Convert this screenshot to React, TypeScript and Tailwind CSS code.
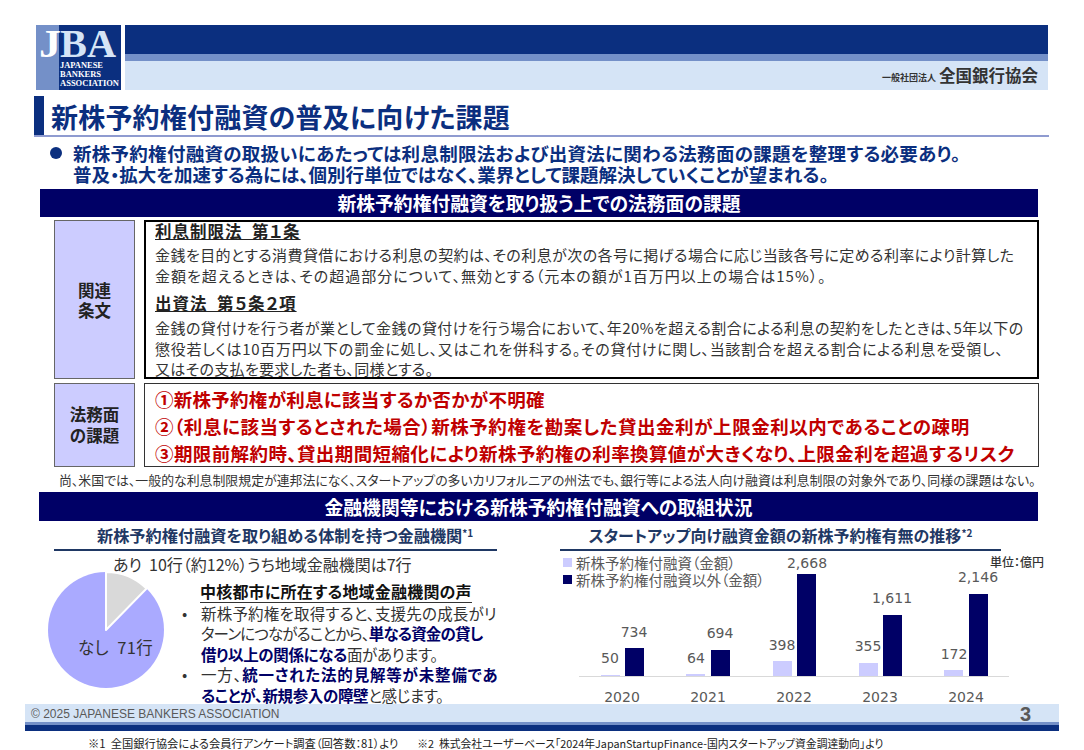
const jp = "font-['Noto_Sans_CJK_JP','Noto_Sans',sans-serif] [font-feature-settings:'palt']";

const bars = [
  { y: "2020", x: 622, lx: 601, lt: 676, dx: 625, dt: 649, l: "50", llx: 610, lly: 664, d: "734", dlx: 634, dly: 638 },
  { y: "2021", x: 708, lx: 686, lt: 675, dx: 711, dt: 651, l: "64", llx: 696, lly: 664, d: "694", dlx: 720, dly: 639 },
  { y: "2022", x: 794, lx: 773, lt: 662, dx: 797, dt: 575, l: "398", llx: 782, lly: 651, d: "2,668", dlx: 807, dly: 569 },
  { y: "2023", x: 880, lx: 859, lt: 664, dx: 883, dt: 616, l: "355", llx: 868, lly: 652, d: "1,611", dlx: 892, dly: 604 },
  { y: "2024", x: 966, lx: 944, lt: 671, dx: 969, dt: 595, l: "172", llx: 954, lly: 660, d: "2,146", dlx: 978, dly: 583 },
];

function Logo() {
  return (
    <svg width="85" height="65" viewBox="0 0 85 65" className="shrink-0 overflow-visible">
      <rect width="85" height="65" fill="#0b2f7f" />
      <rect width="23" height="65" fill="#7490c8" />
      <g fontFamily="'Liberation Serif', serif" fontWeight="700">
        <text x="3" y="32" fontSize="40" fill="#fff" textLength="22" lengthAdjust="spacingAndGlyphs">J</text>
        <text x="24" y="32" fontSize="40" fill="#d5e4f6" textLength="56" lengthAdjust="spacingAndGlyphs">BA</text>
        <text x="24" y="43" fontSize="8" fill="#fff" textLength="43" lengthAdjust="spacingAndGlyphs">JAPANESE</text>
        <text x="24" y="52" fontSize="8" fill="#fff" textLength="41" lengthAdjust="spacingAndGlyphs">BANKERS</text>
        <text x="24" y="61" fontSize="8" fill="#fff" textLength="59" lengthAdjust="spacingAndGlyphs">ASSOCIATION</text>
      </g>
    </svg>
  );
}

function Pie() {
  const a = (44.4 * Math.PI) / 180;
  const r = 58;
  const px = 58 + r * Math.sin(a);
  const py = 58 - r * Math.cos(a);
  return (
    <svg width="118" height="118" viewBox="0 0 118 118" className="shrink-0">
      <circle cx="58" cy="58" r={r} fill="#aaaaff" />
      <path d={`M58 58 L58 0 A${r} ${r} 0 0 1 ${px} ${py} Z`} fill="#d9d9d9" stroke="#fff" strokeWidth="2" strokeLinejoin="round" />
    </svg>
  );
}

function Chart() {
  return (
    <svg width="500" height="150" viewBox="560 555 500 150" className="block">
      {bars.map((b) => (
        <g key={b.y} fontFamily="'DejaVu Sans', sans-serif" fontSize="14" fill="#595959" textAnchor="middle">
          <rect x={b.lx} y={b.lt} width="19" height={677 - b.lt} fill="#ccccff" />
          <rect x={b.dx} y={b.dt} width="19" height={677 - b.dt} fill="#000066" />
          <text x={b.llx} y={b.lly}>{b.l}</text>
          <text x={b.dlx} y={b.dly}>{b.d}</text>
          <text x={b.x} y="703">{b.y}</text>
        </g>
      ))}
      <line x1="579" x2="1009" y1="677.5" y2="677.5" stroke="#d9d9d9" strokeWidth="1" />
    </svg>
  );
}

export default function App() {
  return (
    <div className={`${jp} relative w-[1084px] h-[750px] overflow-hidden bg-white pt-[25px]`}>
      <div className="ml-[36px] flex h-[65px] w-[1012px] gap-[4px]">
        <Logo />
        <div className="flex flex-1 flex-col">
          <div className="h-[29px] bg-[#0b2f7f]" />
          <div className="h-[7px] bg-[#7490c8]" />
          <div className="flex flex-1 items-center justify-end gap-[3px] bg-[#d5e4f6] pr-[10px]">
            <span className="text-[9px] font-bold leading-none text-[#333] mt-[3px]">一般社団法人</span>
            <span className="text-[16.5px] font-bold leading-none text-[#333]">全国銀行協会</span>
          </div>
        </div>
      </div>

      <div className="ml-[34px] mt-[6px] flex h-[41px] w-[1015px] border-b-2 border-[#8f9bd0]">
        <div className="w-[10px] bg-[#0b2f7f]" />
        <h1 className="ml-[7px] text-[27px] font-bold leading-[42px] tracking-[0.2px] text-[#0b2f7f] whitespace-nowrap">新株予約権付融資の普及に向けた課題</h1>
      </div>

      <div className="ml-[50px] mt-[6px] flex h-[46px] text-[18.5px] font-bold leading-[21px] text-[#0b2f7f] whitespace-nowrap">
        <span className="mt-[4px] h-[12px] w-[12px] rounded-full bg-[#0b2f7f]" />
        <div className="ml-[11px]">
          <div className="tracking-[0.28px]">新株予約権付融資の取扱いにあたっては利息制限法および出資法に関わる法務面の課題を整理する必要あり。</div>
          <div>普及・拡大を加速する為には、個別行単位ではなく、業界として課題解決していくことが望まれる。</div>
        </div>
      </div>

      <div className="ml-[40px] h-[28px] w-[998px] bg-[#000066] text-center text-[18.8px] font-bold leading-[28px] text-white">新株予約権付融資を取り扱う上での法務面の課題</div>

      <div className="ml-[54px] mt-[3px] flex h-[159px] w-[985px] gap-[9px]">
        <div className="flex w-[81px] items-center justify-center border border-[#666] bg-[#ccccff] text-center text-[16.5px] font-bold leading-[20px] text-[#222]">関連<br />条文</div>
        <div className="flex-1 border-2 border-black px-[9px] text-[15px] leading-[21px] text-[#333] whitespace-nowrap">
          <div className="mt-[-1px] text-[16.5px] font-bold tracking-[1px] text-[#222] underline">利息制限法&nbsp;&nbsp;第１条</div>
          <div className="mt-[2px] tracking-[0.43px]">金銭を目的とする消費貸借における利息の契約は、その利息が次の各号に掲げる場合に応じ当該各号に定める利率により計算した</div>
          <div className="tracking-[1px]">金額を超えるときは、その超過部分について、無効とする（元本の額が1百万円以上の場合は15%）。</div>
          <div className="mt-[7px] text-[16.5px] font-bold tracking-[1px] text-[#222] underline">出資法&nbsp;&nbsp;第５条２項</div>
          <div className="mt-[3px] tracking-[0.45px]">金銭の貸付けを行う者が業として金銭の貸付けを行う場合において、年20%を超える割合による利息の契約をしたときは、5年以下の</div>
          <div className="tracking-[0.7px]">懲役若しくは10百万円以下の罰金に処し、又はこれを併科する。その貸付けに関し、当該割合を超える割合による利息を受領し、</div>
          <div className="mt-[-1px] tracking-[0.3px]">又はその支払を要求した者も、同様とする。</div>
        </div>
      </div>

      <div className="ml-[54px] mt-[4px] flex h-[84px] w-[985px] gap-[9px]">
        <div className="flex w-[81px] items-center justify-center border border-[#666] bg-[#ccccff] text-center text-[16.5px] font-bold leading-[21px] text-[#222]">法務面<br />の課題</div>
        <div className="flex-1 border border-[#333] px-[10px] pt-[2px] text-[18.5px] font-bold leading-[27px] text-[#c00000] whitespace-nowrap">
          <div className="tracking-[0.27px]">①新株予約権が利息に該当するか否かが不明確</div>
          <div className="tracking-[0.55px]">②（利息に該当するとされた場合）新株予約権を勘案した貸出金利が上限金利以内であることの疎明</div>
          <div className="tracking-[0.4px]">③期限前解約時、貸出期間短縮化により新株予約権の利率換算値が大きくなり、上限金利を超過するリスク</div>
        </div>
      </div>

      <div className="ml-[59px] mt-[4px] h-[21px] text-[12.9px] leading-[18px] text-[#333] whitespace-nowrap">尚、米国では、一般的な利息制限規定が連邦法になく、スタートアップの多いカリフォルニアの州法でも、銀行等による法人向け融資は利息制限の対象外であり、同様の課題はない。</div>

      <div className="ml-[39px] h-[29px] w-[999px] bg-[#000066] text-center text-[18.8px] font-bold leading-[29px] text-white">金融機関等における新株予約権付融資への取組状況</div>

      <div className="flex">
        <div className="ml-[54px] w-[443px]">
          <div className="mt-[3px] h-[27px] border-b-2 border-[#1f3864] pl-[43px] text-[16.2px] font-bold leading-[22px] text-[#1f3864] whitespace-nowrap">新株予約権付融資を取り組める体制を持つ金融機関<sup className="text-[10px]">*1</sup></div>
          <div className="ml-[59px] mt-[3px] text-[16px] leading-[20px] text-[#333] whitespace-nowrap">あり&nbsp;&nbsp;10行（約12%）うち地域金融機関は7行</div>
          <div className="flex">
            <div className="relative ml-[-6px] mt-[-2px] w-[118px]">
              <Pie />
              <span className="absolute left-[30px] top-[65px] text-[16.5px] leading-[20px] tracking-[0.4px] text-[#333] whitespace-nowrap">なし&nbsp;&nbsp;71行</span>
            </div>
            <div className="ml-[35px] mt-[7px] text-[15.5px] leading-[20.4px] text-[#333] whitespace-nowrap">
              <div className="ml-[-1px] w-fit border-b border-[#333] text-[16px] font-bold leading-[21px] tracking-[0.2px] text-[#111]">中核都市に所在する地域金融機関の声</div>
              <div className="relative">
                <span className="absolute left-[-19px]">•</span>
                <div className="tracking-[0.2px]">新株予約権を取得すると、支援先の成長がリ</div>
                <div className="tracking-[-0.85px]">ターンにつながることから、<b className="text-[#000066]">単なる資金の貸し</b></div>
                <div className="tracking-[-0.35px]"><b className="text-[#000066]">借り以上の関係になる</b>面があります。</div>
              </div>
              <div className="relative">
                <span className="absolute left-[-19px]">•</span>
                <div className="tracking-[0.8px]">一方、<b className="text-[#000066]">統一された法的見解等が未整備であ</b></div>
                <div className="tracking-[-0.35px]"><b className="text-[#000066]">ることが、新規参入の障壁</b>と感じます。</div>
              </div>
            </div>
          </div>
        </div>

        <div className="relative ml-[63px] w-[441px]">
          <div className="mt-[3px] h-[27px] border-b-2 border-[#1f3864] text-center text-[16px] font-bold leading-[22px] text-[#1f3864] whitespace-nowrap">スタートアップ向け融資金額の新株予約権有無の推移<sup className="text-[10px]">*2</sup></div>
          <div className="mt-[3px]">
            <Chart />
          </div>
          <div className="absolute left-[3px] top-[33px] text-[14.5px] leading-[17px] text-[#595959] whitespace-nowrap">
            <div className="flex items-center gap-[4px]"><i className="h-[9px] w-[9px] bg-[#ccccff]" />新株予約権付融資（金額）</div>
            <div className="flex items-center gap-[4px]"><i className="h-[9px] w-[9px] bg-[#000066]" />新株予約権付融資以外（金額）</div>
          </div>
          <div className="absolute left-[430px] top-[34px] text-[12px] font-medium leading-[14px] text-[#333] whitespace-nowrap">単位：億円</div>
        </div>
      </div>

      <div className="absolute left-[25px] top-[704px] w-[1034px]">
        <div className="flex h-[18px] items-center justify-between bg-[#d5e4f6] pl-[6px] pr-[28px] pt-[2px] font-['Liberation_Sans',sans-serif] text-[#595959]">
          <span className="text-[12px] leading-none">© 2025 JAPANESE BANKERS ASSOCIATION</span>
          <span className="text-[20px] font-bold leading-none">3</span>
        </div>
        <div className="h-[3px] bg-[#7490c8]" />
        <div className="h-[6px] bg-[#0b2f7f]" />
      </div>

      <div className="absolute left-[88px] top-[736px] flex gap-[19px] leading-[14px] text-[#222] whitespace-nowrap">
        <span className="text-[11.3px]">※1&nbsp;&nbsp;全国銀行協会による会員行アンケート調査（回答数：81）より</span>
        <span className="text-[10.8px]">※2&nbsp;&nbsp;株式会社ユーザーベース「2024年JapanStartupFinance-国内スタートアップ資金調達動向」より</span>
      </div>
    </div>
  );
}
